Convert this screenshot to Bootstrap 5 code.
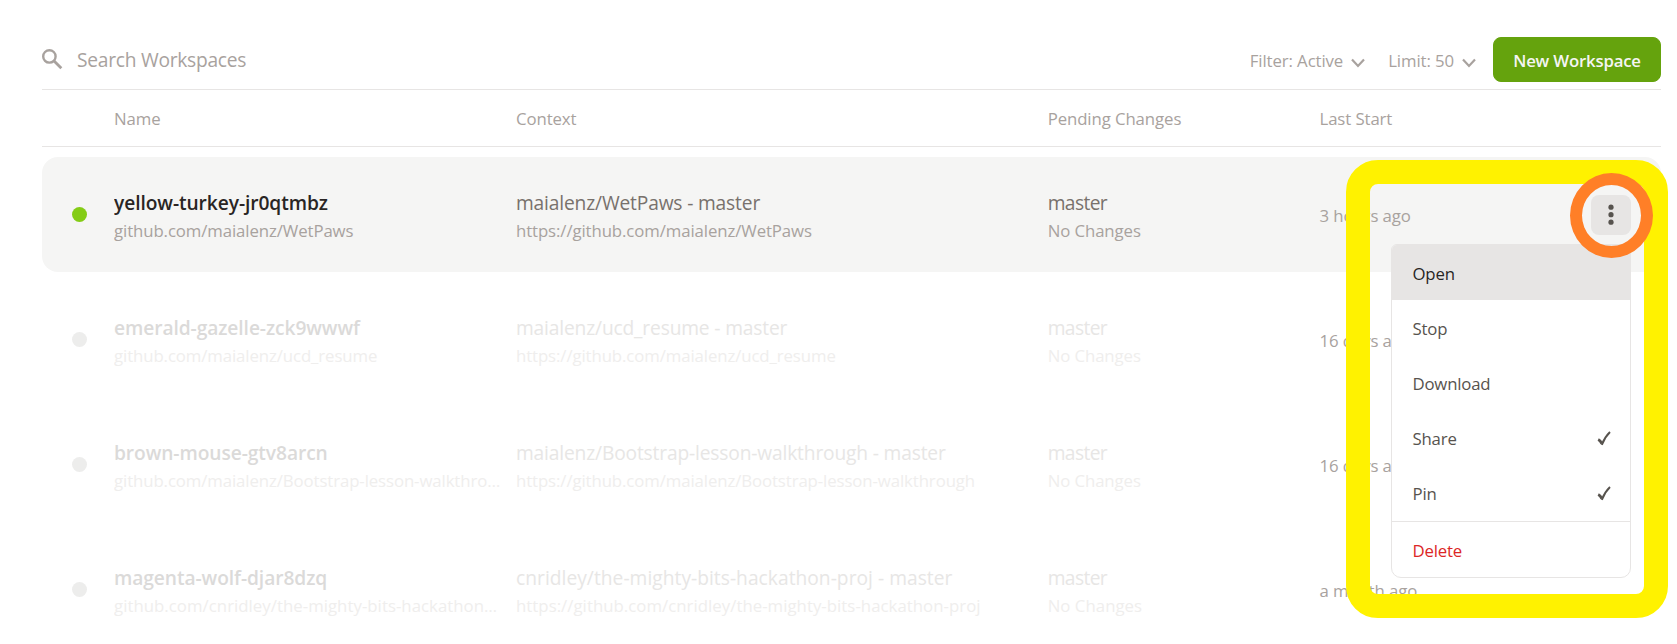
<!DOCTYPE html>
<html lang="en">
<head>
<meta charset="utf-8">
<meta name="viewport" content="width=device-width, initial-scale=1">
<title>Workspaces</title>
<link rel="stylesheet" href="https://cdn.jsdelivr.net/npm/bootstrap@5.3.0/dist/css/bootstrap.min.css">
<style>
  body { font-family: "Open Sans", "Noto Sans", sans-serif; font-size: 16.8px; line-height: 28px; letter-spacing: -.1px; color: #a8a29e; background: #fff; overflow: hidden; }
  .page { height: 644px; padding: 37px 16px 0 42px; }
  .toolbar { height: 53px; border-bottom: 1px solid #e7e5e4; }
  .search-box { padding-top: 1px; }
  .search-box input { width: 400px; font-size: 19.2px; letter-spacing: -.26px; color: #a8a29e; line-height: 28px; }
  .search-box input::placeholder { color: #a8a29e; opacity: 1; }
  .search-box svg { margin-right: 14px; }
  .picker { color: #a8a29e; padding-top: 3px; }
  .picker svg { margin: 3px 0 0 8px; }
  .picker-filter { margin-right: 23px; }
  .picker-limit { margin-right: 17px; }
  .btn-new { --bs-btn-color: #f5f5f4; --bs-btn-bg: #65a30d; --bs-btn-border-color: #65a30d; --bs-btn-font-weight: 600; --bs-btn-font-size: 16.8px; --bs-btn-line-height: 28px; --bs-btn-border-radius: 8px; width: 168px; height: 45px; letter-spacing: -.2px; padding: 2px 0 0; }
  .ws-grid { display: grid; grid-template-columns: 72px 402px 531.7px 271.8px 1fr; align-items: center; }
  .head-row { height: 57px; border-bottom: 1px solid #e7e5e4; margin-bottom: 10px; padding-top: 2px; }
  .ws-row { height: 115px; border-radius: 16px; margin-bottom: 10px; }
  .ws-row.selected { background: #f5f5f4; }
  .ws-cell { padding: 5px 14px 0 0; min-width: 0; }
  .ws-name { font-size: 19.2px; font-weight: 600; color: #292524; letter-spacing: -.08px; }
  .ws-ctx { font-size: 19.2px; color: #78716c; letter-spacing: -.16px; }
  .ws-sub { letter-spacing: -.1px; }
  .ws-branch { letter-spacing: -.6px; }
  .ws-time { padding-top: 2px; }
  .loose .ws-sub, .loose .ws-ctx:not(.ws-branch) { letter-spacing: .03px; }
  .dot { width: 15px; height: 15px; margin-left: 30px; background: #ededec; }
  .selected .dot { background: #84cc16; }
  .idle .ws-name { color: #dbdad9; }
  .idle .ws-ctx { color: #e7e6e5; }
  .idle .ws-sub { color: #efeeed; }
  .more-cell { padding-right: 30px; }
  .more-btn { width: 40px; height: 40px; border-radius: 8px; background: #e7e5e4; }
  .more-menu.dropdown-menu { display: block; top: 49px; right: 0; width: 240px; padding: 0; border: 1px solid #e7e5e4; border-radius: 6px 0 10px 10px; font-size: inherit; color: #57534e; }
  .more-menu .dropdown-item { height: 55px; padding: 3px 19px 0 20.5px; line-height: 28px; color: #57534e; letter-spacing: -.2px; }
  .more-menu .dropdown-item.current { background: #e7e5e4; color: #292524; border-radius: 5px 0 0 0; }
  .more-menu .pin-item { height: 56px; padding-bottom: 1px; }
  .more-menu .delete-item { color: #dc2626; border-top: 1px solid #e7e5e4; height: 56px; border-radius: 0 0 9px 9px; }
  .callout { left: 1346px; top: 160px; width: 322px; height: 458px; border: 24px solid #fff200; border-radius: 32px; pointer-events: none; z-index: 1100; }
  .ring-mark { left: 1570px; top: 173px; width: 83px; height: 85px; border: 12px solid #ff7f27; border-radius: 50%; pointer-events: none; z-index: 1101; }
</style>
</head>
<body>
<main class="page position-relative overflow-hidden">
  <div class="toolbar d-flex align-items-start justify-content-between">
    <label class="search-box d-flex align-items-center h-100 pb-2">
      <svg width="21" height="21" viewBox="0 0 21 21" fill="none" stroke="#a8a29e"><circle cx="7.4" cy="7.4" r="6.2" stroke-width="2.4"/><path d="M11.8 11.8 19.3 19.3" stroke-width="2.8"/></svg>
      <input type="text" class="border-0 p-0 bg-transparent" placeholder="Search Workspaces">
    </label>
    <div class="d-flex align-items-center">
      <div class="picker picker-filter d-flex align-items-center">Filter: Active<svg width="14" height="10" viewBox="0 0 14 10" fill="none" stroke="#a8a29e" stroke-width="2.2"><path d="M1 1.4 7 7.9 13 1.4"/></svg></div>
      <div class="picker picker-limit d-flex align-items-center">Limit: 50<svg width="14" height="10" viewBox="0 0 14 10" fill="none" stroke="#a8a29e" stroke-width="2.2"><path d="M1 1.4 7 7.9 13 1.4"/></svg></div>
      <button type="button" class="btn btn-new">New Workspace</button>
    </div>
  </div>

  <div class="ws-grid head-row">
    <div></div><div>Name</div><div>Context</div><div>Pending Changes</div><div>Last Start</div>
  </div>

  <div class="ws-grid ws-row selected">
    <div class="dot rounded-circle"></div>
    <div class="ws-cell"><div class="ws-name text-truncate">yellow-turkey-jr0qtmbz</div><div class="ws-sub text-truncate">github.com/maialenz/WetPaws</div></div>
    <div class="ws-cell"><div class="ws-ctx text-truncate">maialenz/WetPaws - master</div><div class="ws-sub text-truncate">https://github.com/maialenz/WetPaws</div></div>
    <div class="ws-cell"><div class="ws-ctx ws-branch">master</div><div class="ws-sub">No Changes</div></div>
    <div class="more-cell d-flex align-items-center justify-content-between">
      <span class="ws-time">3 hours ago</span>
      <div class="dropdown">
        <button type="button" class="more-btn border-0 p-0 d-flex align-items-center justify-content-center" aria-label="More actions">
          <svg width="6" height="22" viewBox="0 0 6 22" fill="#57534e"><circle cx="3" cy="3.2" r="2.6"/><circle cx="3" cy="10.7" r="2.6"/><circle cx="3" cy="18.2" r="2.6"/></svg>
        </button>
        <div class="dropdown-menu more-menu">
          <a class="dropdown-item current d-flex align-items-center">Open</a>
          <a class="dropdown-item d-flex align-items-center">Stop</a>
          <a class="dropdown-item d-flex align-items-center">Download</a>
          <a class="dropdown-item d-flex align-items-center justify-content-between">Share<svg width="14" height="15" viewBox="0 0 14 15" fill="none" stroke="#57534e"><path d="M1.2 8.6Q3.3 9.6 4.8 12.6" stroke-width="2.8"/><path d="M4.8 13.8Q7.6 6.2 13 1" stroke-width="1.9"/></svg></a>
          <a class="dropdown-item pin-item d-flex align-items-center justify-content-between">Pin<svg width="14" height="15" viewBox="0 0 14 15" fill="none" stroke="#57534e"><path d="M1.2 8.6Q3.3 9.6 4.8 12.6" stroke-width="2.8"/><path d="M4.8 13.8Q7.6 6.2 13 1" stroke-width="1.9"/></svg></a>
          <a class="dropdown-item delete-item d-flex align-items-center">Delete</a>
        </div>
      </div>
    </div>
  </div>

  <div class="ws-grid ws-row idle">
    <div class="dot rounded-circle"></div>
    <div class="ws-cell"><div class="ws-name text-truncate">emerald-gazelle-zck9wwwf</div><div class="ws-sub text-truncate">github.com/maialenz/ucd_resume</div></div>
    <div class="ws-cell"><div class="ws-ctx text-truncate">maialenz/ucd_resume - master</div><div class="ws-sub text-truncate">https://github.com/maialenz/ucd_resume</div></div>
    <div class="ws-cell"><div class="ws-ctx ws-branch">master</div><div class="ws-sub">No Changes</div></div>
    <div class="ws-time">16 days ago</div>
  </div>

  <div class="ws-grid ws-row idle">
    <div class="dot rounded-circle"></div>
    <div class="ws-cell"><div class="ws-name text-truncate">brown-mouse-gtv8arcn</div><div class="ws-sub text-truncate">github.com/maialenz/Bootstrap-lesson-walkthrough</div></div>
    <div class="ws-cell"><div class="ws-ctx text-truncate">maialenz/Bootstrap-lesson-walkthrough - master</div><div class="ws-sub text-truncate">https://github.com/maialenz/Bootstrap-lesson-walkthrough</div></div>
    <div class="ws-cell"><div class="ws-ctx ws-branch">master</div><div class="ws-sub">No Changes</div></div>
    <div class="ws-time">16 days ago</div>
  </div>

  <div class="ws-grid ws-row idle loose">
    <div class="dot rounded-circle"></div>
    <div class="ws-cell"><div class="ws-name text-truncate">magenta-wolf-djar8dzq</div><div class="ws-sub text-truncate">github.com/cnridley/the-mighty-bits-hackathon-proj</div></div>
    <div class="ws-cell"><div class="ws-ctx text-truncate">cnridley/the-mighty-bits-hackathon-proj - master</div><div class="ws-sub text-truncate">https://github.com/cnridley/the-mighty-bits-hackathon-proj</div></div>
    <div class="ws-cell"><div class="ws-ctx ws-branch">master</div><div class="ws-sub">No Changes</div></div>
    <div class="ws-time">a month ago</div>
  </div>

  <!-- Highlight marks drawn over the menu and its button -->
  <div class="callout position-absolute"></div>
  <div class="ring-mark position-absolute"></div>
</main>
<script src="https://cdn.jsdelivr.net/npm/bootstrap@5.3.0/dist/js/bootstrap.bundle.min.js"></script>
</body>
</html>
